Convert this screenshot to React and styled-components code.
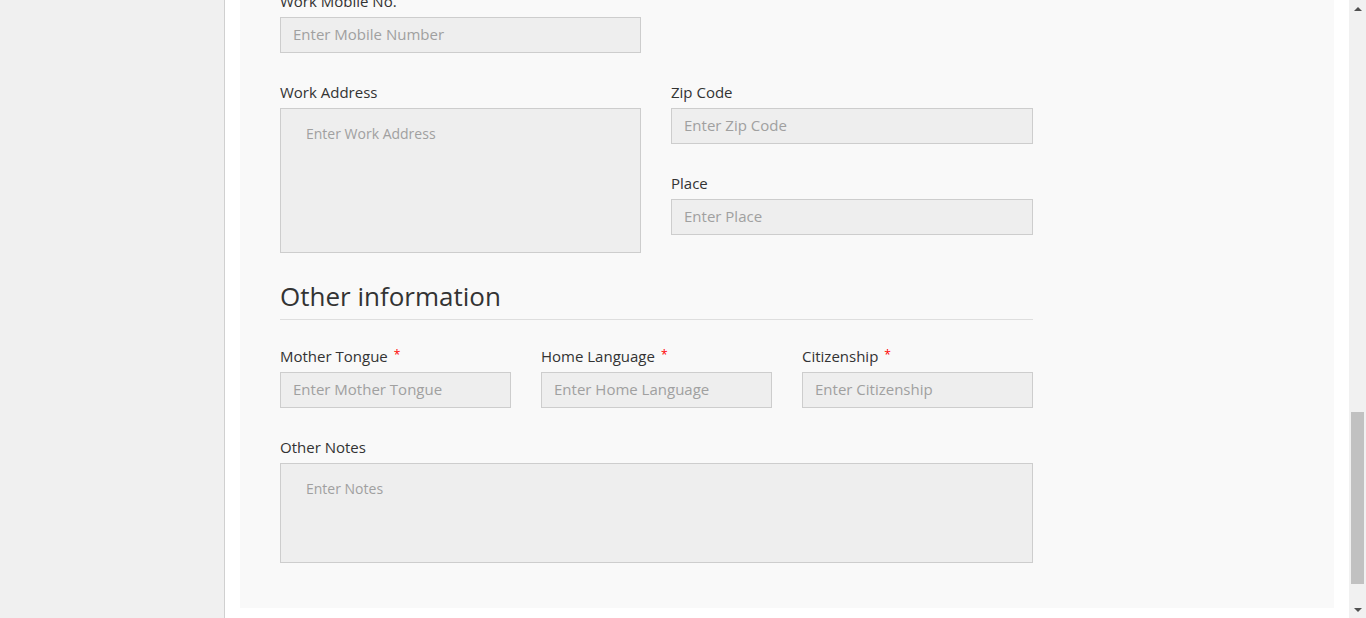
import React, { useLayoutEffect, useRef } from 'react';
import styled, { createGlobalStyle } from 'styled-components';

const GlobalStyle = createGlobalStyle`
html, body {
    margin: 0;
    padding: 0;
    height: 100%;
    overflow: hidden;
    font-family: "Open Sans", "Liberation Sans", sans-serif;
}
* { box-sizing: border-box; }
`;

const Window = styled.div`
display: flex;
height: 100vh;
`;

const Viewport = styled.div`
flex: 1;
height: 100vh;
overflow: hidden;
display: flex;
align-items: flex-start;
background-color: #fff;
`;

// the browser's scroll bar, drawn as the page is scrolled to its end
const ScrollBar = styled.div`
flex: 0 0 17px;
display: flex;
flex-direction: column;
background-color: #f1f1f1;
`;

const Arrow = styled.div`
height: 17px;
display: flex;
align-items: center;
justify-content: center;
&::after {
    content: "";
    border-left: 4px solid transparent;
    border-right: 4px solid transparent;
    ${props => props.down
        ? 'border-top: 4px solid #505050;'
        : 'border-bottom: 4px solid #505050;'}
}
`;

const Track = styled.div`
flex: 1;
display: flex;
flex-direction: column;
justify-content: flex-end;
padding: 0 2px 17px 2px;
`;

const Thumb = styled.div`
height: 172px;
background-color: #c1c1c1;
`;

const Sidebar = styled.aside`
position: sticky;
top: 0;
flex: 0 0 225px;
height: 100vh;
background-color: #f0f0f0;
border-right: 1px solid #d0d0d0;
`;

const Main = styled.main`
flex: 1;
padding: 20px 15px 10px 15px;
`;

const PageTitle = styled.h1`
margin: 0 0 20px 25px;
font-size: 26px;
font-weight: 400;
color: #333;
`;

const Panel = styled.section`
background-color: #f9f9f9;
padding: 40px 40px 45px 40px;
`;

const Form = styled.div`
width: 753px;
`;

const Heading = styled.h2`
margin: 0 0 26px 0;
padding-bottom: 9px;
font-size: 26px;
line-height: 28px;
font-weight: 400;
color: #333;
border-bottom: 1px solid #dedede;
`;

const Row = styled.div`
display: grid;
grid-template-columns: ${props => props.cols};
column-gap: 30px;
margin-bottom: 29px;
&:last-child { margin-bottom: 0; }
`;

const Column = styled.div`
display: flex;
flex-direction: column;
gap: 29px;
`;

const Field = styled.div`
display: flex;
flex-direction: column;
`;

const Label = styled.label`
font-size: 15px;
line-height: 20px;
color: #333;
margin-bottom: 6px;
`;

const Star = styled.span`
color: #f00;
font-size: 12px;
margin-left: 6px;
vertical-align: top;
line-height: 17px;
`;

const Input = styled.input`
height: 36px;
padding: 0 12px 3px 12px;
border: 1px solid #cdcdcd;
background-color: #eee;
font-family: inherit;
font-size: 15px;
color: #333;
outline: none;
&::placeholder { color: #a0a0a0; }
`;

const TextArea = styled.textarea`
height: ${props => props.h}px;
padding: 15px 25px;
border: 1px solid #cdcdcd;
background-color: #eee;
font-family: inherit;
font-size: 14px;
line-height: 20px;
color: #333;
resize: none;
outline: none;
&::placeholder { color: #a0a0a0; }
`;

const TWO = '361px 1fr';
const THREE = 'repeat(3, 1fr)';

const TextField = ({ label, placeholder, required }) => (
    <Field>
        <Label>{label}{required && <Star>*</Star>}</Label>
        <Input placeholder={placeholder} />
    </Field>
);

const personal = [
    [['First Name', 'Enter First Name', true], ['Last Name', 'Enter Last Name', true], ['Initials', 'Enter Initials']],
    [['Date of Birth', 'DD-MM-YYYY', true], ['Gender', 'Select Gender', true], ['Marital Status', 'Select Status']],
    [['Email', 'Enter Email', true], ['Mobile No.', 'Enter Mobile Number', true], ['Phone No.', 'Enter Phone Number']],
    [['Address', 'Enter Address'], ['Zip Code', 'Enter Zip Code'], ['Place', 'Enter Place']],
    [['Country', 'Enter Country'], ['ID Number', 'Enter ID Number'], ['Passport No.', 'Enter Passport Number']],
];

const work = [
    [['Employee No.', 'Enter Employee Number', true], ['Department', 'Select Department', true], ['Job Title', 'Enter Job Title']],
    [['Start Date', 'DD-MM-YYYY', true], ['Contract Type', 'Select Contract'], ['Hours per Week', 'Enter Hours']],
    [['Manager', 'Select Manager'], ['Location', 'Enter Location'], ['Cost Center', 'Enter Cost Center']],
    [['Work Email', 'Enter Work Email'], ['Work Phone No.', 'Enter Phone Number'], ['Extension', 'Enter Extension']],
];

const Rows = ({ data }) => data.map((row, i) => (
    <Row cols={THREE} key={i}>
        {row.map(([label, placeholder, required]) => (
            <TextField key={label} label={label} placeholder={placeholder} required={required} />
        ))}
    </Row>
));

const App = () => {
    const viewRef = useRef(null);

    useLayoutEffect(() => {
        const el = viewRef.current;
        if (el) el.scrollTop = el.scrollHeight;
    }, []);

    return (
        <Window>
            <GlobalStyle />
            <Viewport ref={viewRef}>
                <Sidebar />
                <Main>
                    <PageTitle>Employee details</PageTitle>
                    <Panel>
                        <Form>
                            <Heading>Personal information</Heading>
                            <Rows data={personal} />
                            <Heading>Work information</Heading>
                            <Rows data={work} />
                            <Row cols={TWO}>
                                <TextField label="Work Mobile No." placeholder="Enter Mobile Number" />
                            </Row>
                            <Row cols={TWO}>
                                <Field>
                                    <Label>Work Address</Label>
                                    <TextArea h={145} placeholder="Enter Work Address" />
                                </Field>
                                <Column>
                                    <TextField label="Zip Code" placeholder="Enter Zip Code" />
                                    <TextField label="Place" placeholder="Enter Place" />
                                </Column>
                            </Row>

                            <Heading>Other information</Heading>
                            <Row cols={THREE}>
                                <TextField label="Mother Tongue" placeholder="Enter Mother Tongue" required />
                                <TextField label="Home Language" placeholder="Enter Home Language" required />
                                <TextField label="Citizenship" placeholder="Enter Citizenship" required />
                            </Row>
                            <Row cols="1fr">
                                <Field>
                                    <Label>Other Notes</Label>
                                    <TextArea h={100} placeholder="Enter Notes" />
                                </Field>
                            </Row>
                        </Form>
                    </Panel>
                </Main>
            </Viewport>
            <ScrollBar>
                <Arrow />
                <Track>
                    <Thumb />
                </Track>
                <Arrow down />
            </ScrollBar>
        </Window>
    );
};

export default App;
